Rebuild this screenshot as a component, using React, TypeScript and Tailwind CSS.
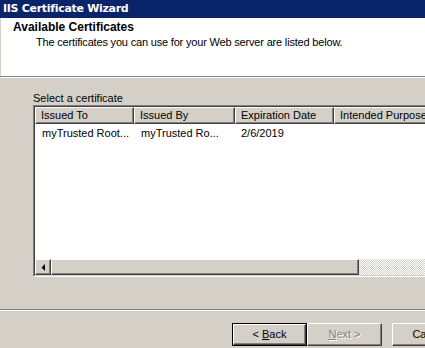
const raised =
  'border border-t-white border-l-white border-b-[#404040] border-r-[#404040] shadow-[inset_-1px_-1px_0_#808080]';

function HeaderCell({ label, w }: { label: string; w: string }) {
  return (
    <div className={`${w} ${raised} h-[17px] shrink-0 bg-[#d4d0c8] pl-[5px] text-[11px] leading-[14px] text-black whitespace-nowrap overflow-hidden`}>
      {label}
    </div>
  );
}

export default function App() {
  return (
    <div className="w-[425px] h-[348px] overflow-hidden bg-[#d4d0c8] font-['Liberation_Sans',Arial,sans-serif] text-[11px] text-black">
      {/* title bar */}
      <div className="h-[18px] bg-[#0a246a] pl-[3px] font-['DejaVu_Sans',sans-serif] text-[11px] font-bold leading-[18px] tracking-[-0.3px] text-white">
        IIS Certificate Wizard
      </div>

      {/* header panel */}
      <div className="h-[58px] bg-white pl-[12px] pt-[2px] border-l border-l-[#d4d0c8]">
        <div className="text-[12px] font-bold leading-[14px]">Available Certificates</div>
        <div className="mt-[2px] pl-[23px] leading-[13px] tracking-[-0.18px]">
          The certificates you can use for your Web server are listed below.
        </div>
      </div>
      <div className="h-[1px] bg-[#808080]" />
      <div className="h-[1px] bg-white" />

      {/* body */}
      <div className="pl-[33px] pt-[13px]">
        <div className="leading-[14px]">Select a certificate</div>
        <div className="h-[172px] w-[420px] border border-t-[#808080] border-l-[#808080] border-b-white border-r-white">
          <div className="flex h-full flex-col border border-t-[#404040] border-l-[#404040] border-b-[#d4d0c8] border-r-[#d4d0c8] bg-white">
            <div className="flex">
              <HeaderCell label="Issued To" w="w-[99px]" />
              <HeaderCell label="Issued By" w="w-[101px]" />
              <HeaderCell label="Expiration Date" w="w-[99px]" />
              <HeaderCell label="Intended Purpose" w="w-[120px]" />
            </div>
            <div className="flex flex-1 pt-[2px] leading-[14px] whitespace-nowrap">
              <div className="w-[99px] pl-[7px]">myTrusted Root...</div>
              <div className="w-[101px] pl-[7px]">myTrusted Ro...</div>
              <div className="w-[99px] pl-[6px]">2/6/2019</div>
            </div>
            {/* horizontal scrollbar */}
            <div className="flex h-[16px]">
              <div className={`${raised} flex h-[16px] w-[16px] shrink-0 items-center justify-center bg-[#d4d0c8]`}>
                <svg width="4" height="7" viewBox="0 0 4 7">
                  <path d="M4 0v7L0.5 3.5z" fill="#000" />
                </svg>
              </div>
              <div className={`${raised} h-[16px] w-[308px] shrink-0 bg-[#d4d0c8]`} />
              <div className="h-[16px] flex-1 bg-[repeating-conic-gradient(#d4d0c8_0_25%,#ffffff_0_50%)] bg-[length:2px_2px]" />
            </div>
          </div>
        </div>
      </div>

      {/* separator */}
      <div className="mt-[32px] h-[1px] bg-[#808080]" />
      <div className="h-[1px] bg-white" />

      {/* buttons */}
      <div className="flex pl-[232px] pt-[12px]">
        <div className="h-[23px] w-[75px] shrink-0 border border-black">
          <div className={`${raised} flex h-full items-center justify-center bg-[#d4d0c8] text-[11px]`}>
            &lt; <span className="ml-[3px] underline">B</span>ack
          </div>
        </div>
        <div className={`${raised} flex h-[23px] w-[75px] shrink-0 items-center justify-center bg-[#d4d0c8] text-[#808080] [text-shadow:1px_1px_0_#fff]`}>
          <span className="underline">N</span>ext &gt;
        </div>
        <div className={`${raised} ml-[10px] flex h-[23px] w-[75px] shrink-0 items-center justify-center bg-[#d4d0c8]`}>
          Cancel
        </div>
      </div>
    </div>
  );
}
